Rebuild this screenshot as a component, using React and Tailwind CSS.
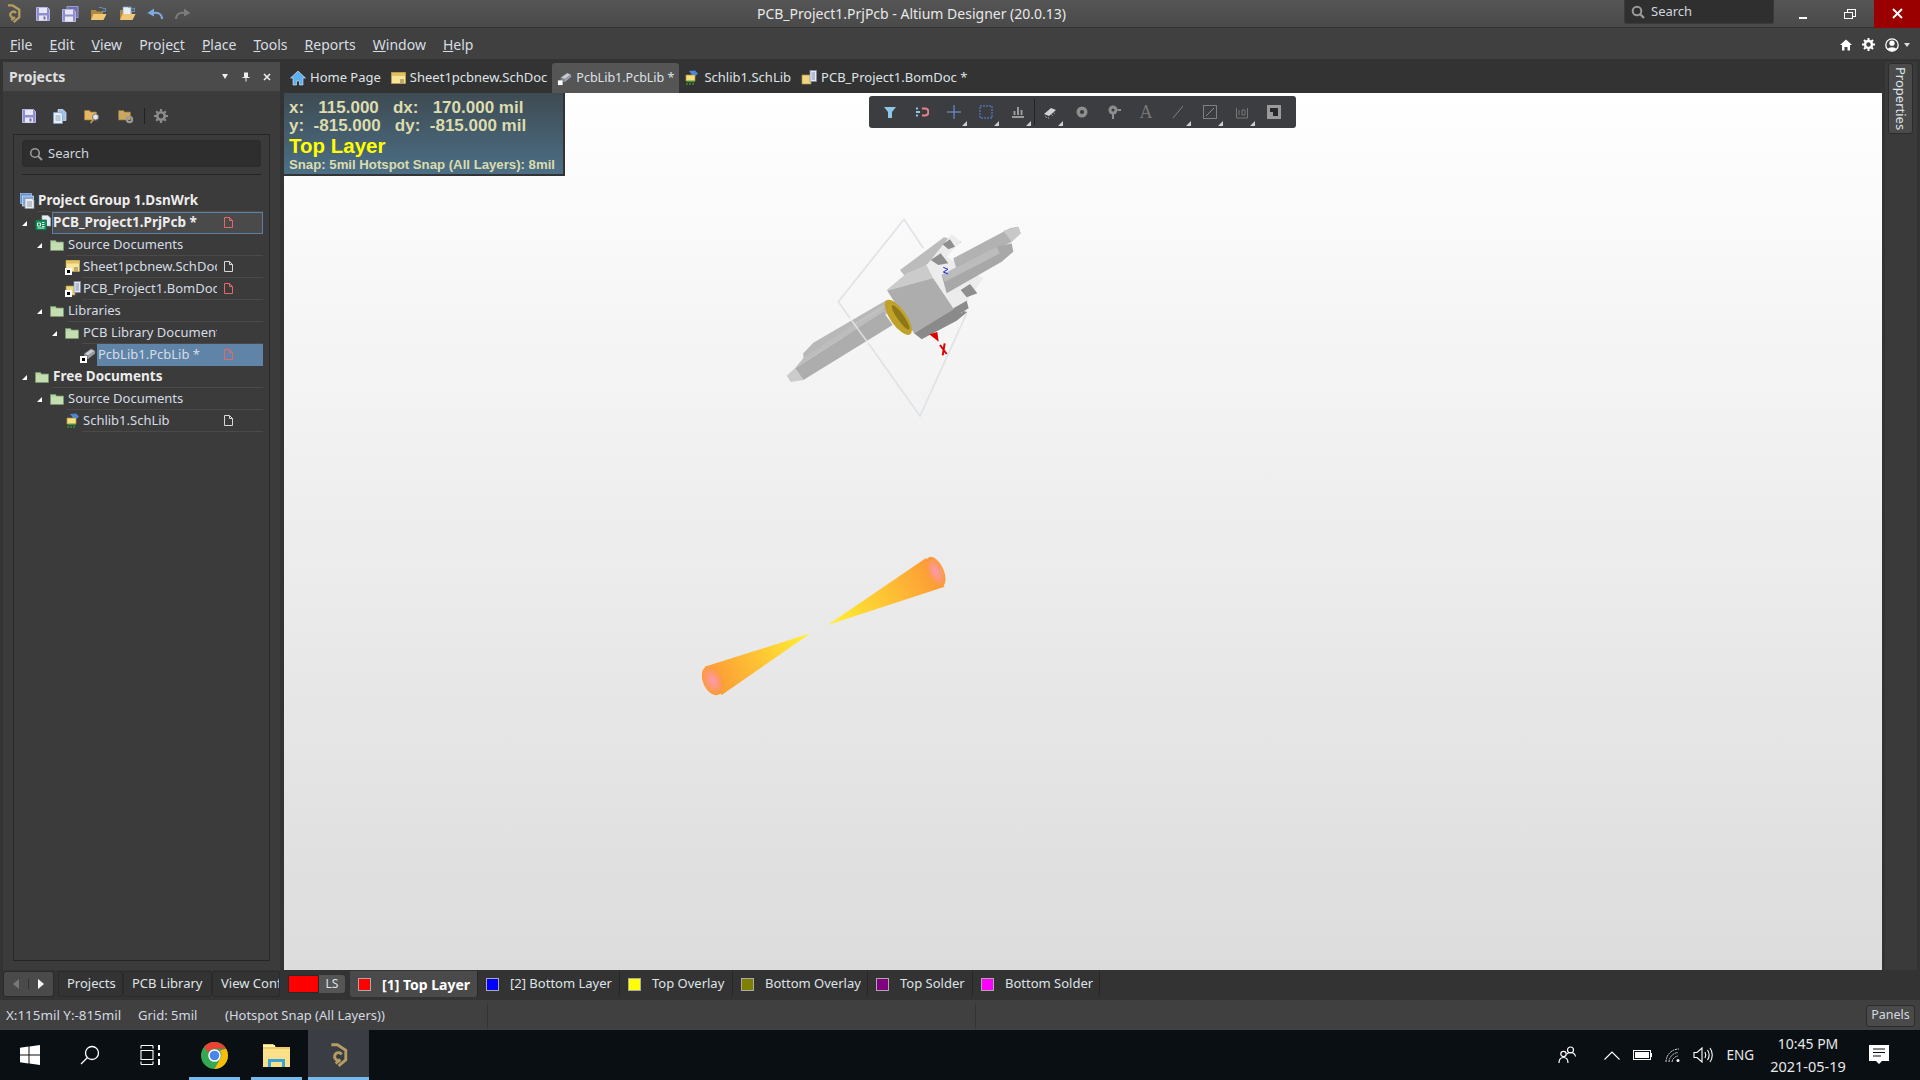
import React from "react";

const ui = { fontFamily: '"Noto Sans", "Open Sans", sans-serif' };

const Floppy = ({ size = 14 }) => (
  <svg width={size} height={size} viewBox="0 0 14 14">
    <path d="M0.500 0.500h11l2 2v11h-13z" fill="#8f8fd0" stroke="#b4b4e8" />
    <rect x="3" y="1" width="8" height="5" fill="#e8e8f4" />
    <rect x="3" y="8.5" width="8" height="5" fill="#e8e8f4" />
    <rect x="7.5" y="9.5" width="2" height="3" fill="#6a6ab0" />
  </svg>
);

const FloppyAll = () => (
  <svg width="17" height="16" viewBox="0 0 17 16">
    <rect x="5" y="0.500" width="11" height="11" fill="#6e6ea8" stroke="#9a9ad0" />
    <path d="M0.500 3.500h11l2 2v10h-13z" fill="#8f8fd0" stroke="#b4b4e8" />
    <rect x="3" y="4" width="8" height="4.500" fill="#e8e8f4" />
    <rect x="3" y="10.500" width="8" height="5" fill="#e8e8f4" />
  </svg>
);

const FolderOpen = ({ paper }) => (
  <svg width="17" height="16" viewBox="0 0 17 16">
    <path d="M1 4h5l1 1.500h6v8H1z" fill="#b08a3e" />
    {paper && <path d="M4 1h8v8H4z" fill="#e9eef6" stroke="#8da4c4" strokeWidth="0.7" />}
    <path d="M1 14l2.500-6h13l-3 6z" fill="#f1c776" />
    <path d="M9 1.500a5 4 0 0 1 5 1.500l1.500-1v3.500h-3.500l1-1" fill="none" stroke="#6f9fd0" strokeWidth="0.8" />
  </svg>
);

const Undo = ({ color }) => (
  <svg width="16" height="12" viewBox="0 0 16 12">
    <path d="M15 11c0-5-4-7-9-6" fill="none" stroke={color} strokeWidth="2" />
    <path d="M0.500 5L7 0.500v8z" fill={color} />
  </svg>
);

const Logo = ({ size = 20, color = "#b59c63" }) => (
  <svg width={size * 0.8} height={size} viewBox="0 0 16 20">
    <path d="M2 1.500h5l7 4.500v8l-6 5" fill="none" stroke={color} strokeWidth="2.400" />
    <path d="M10.500 9.500a3.200 3.200 0 1 0-1 4.500l-4 3" fill="none" stroke={color} strokeWidth="2.400" />
  </svg>
);

const Folder = () => (
  <svg width="14" height="12" viewBox="0 0 14 12">
    <path d="M0.500 1.500h5l1 1.500h7v8.500H0.500z" fill="#b7d5a6" stroke="#7d9c6e" strokeWidth="0.7" />
    <rect x="1" y="4" width="12" height="7" fill="#c3dfb2" />
  </svg>
);

const Shortcut = () => (
  <span className="absolute left-0 bottom-0 flex h-[7px] w-[7px] items-center justify-center bg-white">
    <span className="h-[3px] w-[3px] bg-black" />
  </span>
);

const TreeIcon = ({ kind }) => {
  if (kind === "folder") return <Folder />;
  if (kind === "group")
    return (
      <svg width="16" height="16" viewBox="0 0 16 16">
        <rect x="0.500" y="0.500" width="11" height="10" fill="#5f8fd6" stroke="#a8c4ee" strokeWidth="0.7" />
        <rect x="2.500" y="3" width="11" height="10" fill="#7ba6e0" stroke="#d6e4f6" strokeWidth="0.7" />
        <path d="M5 5.500h7l2 2v8H5z" fill="#e8edf4" stroke="#8a97a8" strokeWidth="0.7" />
        <path d="M7 9h5M7 11h5M7 13h5" stroke="#7a8796" strokeWidth="0.8" />
      </svg>
    );
  if (kind === "prj")
    return (
      <svg width="16" height="16" viewBox="0 0 16 16">
        <path d="M7 0.500h6l2.500 2.500v8H7z" fill="#e9edf3" stroke="#a8b2c0" strokeWidth="0.7" />
        <rect x="0.500" y="5" width="11" height="10" fill="#138a58" stroke="#0b5f3c" strokeWidth="0.7" />
        <path d="M2.500 8h3v3h-3zM7 7.500h2.500M7 9.500h2.500M7 11.500h2.500M2.500 13h7" stroke="#dff2e6" strokeWidth="1" fill="none" />
      </svg>
    );
  if (kind === "sch")
    return (
      <span className="relative block h-[16px] w-[16px]">
        <svg width="16" height="16" viewBox="0 0 16 16">
          <path d="M1 1.500h13.500v11H1z" fill="#f7e39a" stroke="#b79d52" strokeWidth="0.7" />
          <rect x="1" y="1.500" width="13.500" height="3" fill="#e3bf62" />
          <path d="M9 9h4M9 11h4" stroke="#7f7040" strokeWidth="1" />
        </svg>
        <Shortcut />
      </span>
    );
  if (kind === "bom")
    return (
      <span className="relative block h-[16px] w-[16px]">
        <svg width="16" height="16" viewBox="0 0 16 16">
          <path d="M1 5h9v9H1z" fill="#f0d67e" stroke="#ae9548" strokeWidth="0.7" />
          <rect x="9" y="0.500" width="6.500" height="11" fill="#e5e9f2" stroke="#7e88ac" strokeWidth="0.7" />
          <path d="M10.500 3h3.500M10.500 5h3.500M10.500 7h3.500M10.500 9h3.500" stroke="#6c76a0" strokeWidth="0.8" />
        </svg>
        <Shortcut />
      </span>
    );
  if (kind === "lib")
    return (
      <span className="relative block h-[16px] w-[16px]">
        <svg width="16" height="16" viewBox="0 0 16 16">
          <path d="M4 7l7-5 4 2-7 5z" fill="#c8ccd2" stroke="#70757c" strokeWidth="0.6" />
          <path d="M4 7l4 2v3l-4-2z" fill="#80858c" />
          <path d="M8 9l7-5v2.500L8 12z" fill="#9da2a8" />
        </svg>
        <Shortcut />
      </span>
    );
  return (
    <svg width="16" height="16" viewBox="0 0 16 16">
      <path d="M5 1l6-0.500 3 3-4 4z" fill="#4c86d8" />
      <path d="M2 5h9v6H2z" fill="#f5df7e" stroke="#a89240" strokeWidth="0.7" />
      <path d="M3 11.500h8M3 13v2M6 13v2M9 13v2" stroke="#3f8f3c" strokeWidth="1.400" />
    </svg>
  );
};

const DocMark = ({ red }) => (
  <svg width="9" height="11" viewBox="0 0 9 11">
    <path d="M0.500 0.500h5l3 3v7h-8z" fill="none" stroke={red ? "#e4676b" : "#d8d8d8"} />
    <path d="M5.500 0.500v3h3" fill="none" stroke={red ? "#e4676b" : "#d8d8d8"} />
  </svg>
);

const treeRows = [
  { depth: 0, icon: "group", label: "Project Group 1.DsnWrk", bold: true },
  { depth: 1, arrow: true, icon: "prj", label: "PCB_Project1.PrjPcb *", bold: true, mark: "red", box: "focus" },
  { depth: 2, arrow: true, icon: "folder", label: "Source Documents" },
  { depth: 3, icon: "sch", label: "Sheet1pcbnew.SchDoc", mark: "white" },
  { depth: 3, icon: "bom", label: "PCB_Project1.BomDoc", mark: "red" },
  { depth: 2, arrow: true, icon: "folder", label: "Libraries" },
  { depth: 3, arrow: true, icon: "folder", label: "PCB Library Documents" },
  { depth: 4, icon: "lib", label: "PcbLib1.PcbLib *", mark: "red", box: "selected" },
  { depth: 1, arrow: true, icon: "folder", label: "Free Documents", bold: true },
  { depth: 2, arrow: true, icon: "folder", label: "Source Documents" },
  { depth: 3, icon: "schlib", label: "Schlib1.SchLib", mark: "white" },
];

const TreeRow = ({ row }) => (
  <div className="flex h-[22px] items-center" style={{ paddingLeft: 3 + row.depth * 15 }}>
    <span className="flex w-[13px] shrink-0 justify-start">
      {row.arrow && <span className="h-0 w-0 border-b-[5px] border-l-[5px] border-b-white border-l-transparent" />}
    </span>
    <span className="flex w-[17px] shrink-0 items-center justify-start">
      <TreeIcon kind={row.icon} />
    </span>
    <div
      className={
        "flex h-[22px] min-w-0 flex-1 items-center border-b border-[#4a4a4a] " +
        (row.box === "selected" ? "bg-[#5f84a8] border-[#5f84a8] " : "") +
        (row.box === "focus" ? "bg-[#4a4a4a] outline outline-1 -outline-offset-1 outline-[#5b7fa6] " : "")
      }
    >
      <span
        className={
          "min-w-0 flex-1 overflow-hidden whitespace-nowrap pl-px " +
          (row.bold ? "text-[13.500px] font-bold text-[#ececec]" : "text-[13px] text-[#d6dce4]")
        }
      >
        {row.label}
      </span>
      <span className="flex w-[46px] shrink-0 pl-[7px]">{row.mark && <DocMark red={row.mark === "red"} />}</span>
    </div>
  </div>
);

const menus = [
  ["F", "ile"],
  ["E", "dit"],
  ["V", "iew"],
  ["Proje", "c", "t"],
  ["P", "lace"],
  ["T", "ools"],
  ["R", "eports"],
  ["W", "indow"],
  ["H", "elp"],
];

const Menu = ({ parts }) =>
  parts.length === 2 ? (
    <span>
      <span className="underline">{parts[0]}</span>
      {parts[1]}
    </span>
  ) : (
    <span>
      {parts[0]}
      <span className="underline">{parts[1]}</span>
      {parts[2]}
    </span>
  );

const TitleBar = () => (
  <div className="flex h-7 shrink-0 items-center bg-gradient-to-b from-[#555] to-[#4a4a4a] border-b border-[#333]">
    <div className="flex w-[34px] justify-start pl-[6px]">
      <Logo size={19} />
    </div>
    <div className="flex items-center gap-[11.500px] pl-[2px]">
      <Floppy />
      <FloppyAll />
      <FolderOpen />
      <FolderOpen paper />
      <Undo color="#7fa9e0" />
      <span className="-scale-x-100">
        <Undo color="#7b7b7b" />
      </span>
    </div>
    <div className="w-[561px]" />
    <span className="w-[320px] whitespace-nowrap text-center text-[14px] text-[#e8e8e8]">
      PCB_Project1.PrjPcb - Altium Designer (20.0.13)
    </span>
    <div className="flex-1" />
    <div className="flex h-[24px] w-[150px] items-center gap-[6px] self-start rounded-b-[3px] border border-t-0 border-[#3a3a3a] bg-[#2f2f2f] pl-[6px] pt-[1px]">
      <svg width="14" height="14" viewBox="0 0 14 14">
        <circle cx="6" cy="6" r="4.300" fill="none" stroke="#9a9a9a" strokeWidth="2" />
        <path d="M9 9l4 4" stroke="#9a9a9a" strokeWidth="2.400" />
      </svg>
      <span className="text-[13px] text-[#cfd6de]">Search</span>
    </div>
    <div className="flex w-[100px] items-center">
      <span className="ml-[25px] mt-[9px] h-[2px] w-[8px] bg-white" />
      <span className="relative ml-[37px] h-[10px] w-[12px]">
        <span className="absolute right-0 top-0 h-[8px] w-[9px] border border-white" />
        <span className="absolute bottom-0 left-0 h-[7px] w-[9px] border border-white bg-[#505050]" />
      </span>
    </div>
    <div className="flex h-[28px] w-[46px] items-center justify-center bg-[#9b0000]">
      <svg width="11" height="11" viewBox="0 0 11 11">
        <path d="M1 1l9 9M10 1l-9 9" stroke="#fff" strokeWidth="1.800" />
      </svg>
    </div>
  </div>
);

const MenuBar = () => (
  <div className="flex h-[31px] shrink-0 items-center bg-[#404040] pl-[10px] pt-[2px] text-[14px] text-[#d8dde4]">
    <div className="flex gap-[17px]">
      {menus.map((m) => (
        <Menu key={m.join("")} parts={m} />
      ))}
    </div>
    <div className="flex-1" />
    <div className="flex items-center gap-[10px] pr-[10px]">
      <svg width="12" height="12" viewBox="0 0 12 12">
        <path d="M6 0.500L12 6h-2v5.500H7.500V8h-3v3.500H2V6H0z" fill="#fff" />
      </svg>
      <svg width="13" height="13" viewBox="0 0 13 13">
        <circle cx="6.500" cy="6.500" r="3.500" fill="none" stroke="#fff" strokeWidth="2.500" />
        <path d="M6.500 0v2M6.500 11v2M0 6.500h2M11 6.500h2M2 2l1.500 1.500M9.500 9.500L11 11M11 2L9.500 3.500M3.500 9.500L2 11" stroke="#fff" strokeWidth="2" />
      </svg>
      <span className="flex items-center gap-[5px]">
        <svg width="14" height="14" viewBox="0 0 14 14">
          <circle cx="7" cy="7" r="6.200" fill="none" stroke="#fff" strokeWidth="1.300" />
          <circle cx="7" cy="5.200" r="2.600" fill="#fff" />
          <path d="M2.500 11.500c1-3 8-3 9 0L7 13.500z" fill="#fff" />
        </svg>
        <span className="h-0 w-0 border-x-[3.500px] border-t-[4px] border-x-transparent border-t-[#ddd]" />
      </span>
    </div>
  </div>
);

const ProjectsPanel = () => (
  <div className="flex w-[284px] shrink-0 flex-col pl-[3px] pr-[4px] pt-[3px]">
    <div className="flex h-[29px] shrink-0 items-center bg-[#4b4b4b] pl-[6px]">
      <span className="flex-1 text-[14px] font-bold text-[#e0e0e0]">Projects</span>
      <span className="mr-[14px] h-0 w-0 border-x-[3.500px] border-t-[5px] border-x-transparent border-t-[#eee]" />
      <svg className="mr-[13px]" width="8" height="10" viewBox="0 0 8 10">
        <path d="M2 0.500h4v4.500h1.500v1h-3v3.500h-1V6h-3V5H2z" fill="#eee" />
      </svg>
      <svg className="mr-[9px]" width="8" height="8" viewBox="0 0 8 8">
        <path d="M1 1l6 6M7 1L1 7" stroke="#eee" strokeWidth="1.600" />
      </svg>
    </div>
    <div className="flex min-h-0 flex-1 flex-col bg-[#3b3b3b] pb-[9px] pl-[10px] pr-[10px]">
      <div className="flex h-[43px] shrink-0 items-center gap-[17px] pl-[9px] pt-[7px]">
        <Floppy />
        <svg width="14" height="15" viewBox="0 0 14 15">
          <path d="M5 0.500h5l3 3v8H5z" fill="#9ec2e8" stroke="#dfe9f6" strokeWidth="0.700" />
          <path d="M0.500 3.500h7l2 2v9h-9z" fill="#e8eef6" stroke="#7fa0c8" strokeWidth="0.700" />
          <path d="M2.500 7h5M2.500 9h5M2.500 11h5" stroke="#6d8fb8" strokeWidth="0.800" />
        </svg>
        <svg width="17" height="15" viewBox="0 0 17 15">
          <path d="M0.500 1.500h5l1 1.500h6v8h-12z" fill="#e3b765" stroke="#9c7c3a" strokeWidth="0.700" />
          <circle cx="11.500" cy="8" r="3" fill="#dfe6ee" stroke="#777" />
          <path d="M9.500 10.500L6.500 14" stroke="#c89c4a" strokeWidth="1.600" />
        </svg>
        <svg width="17" height="15" viewBox="0 0 17 15">
          <path d="M0.500 1.500h5l1 1.500h6v8h-12z" fill="#c9a763" stroke="#8c7238" strokeWidth="0.700" />
          <circle cx="11.500" cy="10.500" r="2.700" fill="none" stroke="#9a9a9a" strokeWidth="2" />
        </svg>
        <span className="-mx-[8px] h-[16px] w-px bg-[#222]" />
        <svg width="14" height="14" viewBox="0 0 13 13">
          <circle cx="6.500" cy="6.500" r="3.500" fill="none" stroke="#8b8b8b" strokeWidth="2.500" />
          <path d="M6.500 0v2M6.500 11v2M0 6.500h2M11 6.500h2M2 2l1.500 1.500M9.500 9.500L11 11M11 2L9.500 3.500M3.500 9.500L2 11" stroke="#8b8b8b" strokeWidth="2" />
        </svg>
      </div>
      <div className="flex min-h-0 flex-1 flex-col border border-[#262626] pb-[2px]">
        <div className="mx-[8px] mt-[5px] flex h-[27px] shrink-0 items-center gap-[5px] rounded-[3px] border border-[#2b2b2b] bg-[#2e2e2e] pl-[6px]">
          <svg width="14" height="14" viewBox="0 0 14 14">
            <circle cx="6" cy="6" r="4.300" fill="none" stroke="#9a9a9a" strokeWidth="1.600" />
            <path d="M9 9l4 4" stroke="#9a9a9a" strokeWidth="2" />
          </svg>
          <span className="text-[13px] text-[#cfd6de]">Search</span>
        </div>
        <div className="mx-[8px] mb-[15px] mt-[7px] h-px shrink-0 bg-[#262626]" />
        <div className="-ml-[10px] mr-[6px]">
          {treeRows.map((row) => (
            <TreeRow key={row.depth + row.label} row={row} />
          ))}
        </div>
      </div>
    </div>
  </div>
);

const DocTab = ({ active, icon, children }) => (
  <div
    className={
      "flex items-center gap-[4px] whitespace-nowrap rounded-t-[3px] px-[5px] text-[#dfe3e8] " +
      (active ? "h-[30px] bg-[#555] text-[12.500px]" : "mb-[1px] h-[29px] text-[13px]")
    }
  >
    {icon}
    {children}
  </div>
);

const DocTabs = () => (
  <div className="flex h-[34px] shrink-0 items-end pl-px">
    <DocTab
      icon={
        <svg width="16" height="16" viewBox="0 0 16 16">
          <path d="M8 1L0.500 8H3v7h3.500v-4h3v4H13V8h2.500z" fill="#5fb0ee" stroke="#dcecfa" strokeWidth="0.600" />
        </svg>
      }
    >
      Home Page
    </DocTab>
    <DocTab
      icon={
        <svg width="15" height="12" viewBox="0 0 15 12">
          <path d="M0.500 0.500h14v11H0.500z" fill="#f7e39a" stroke="#b79d52" />
          <rect x="1" y="1" width="13" height="3" fill="#e3bf62" />
          <path d="M9 8h4M9 10h4" stroke="#7f7040" />
        </svg>
      }
    >
      Sheet1pcbnew.SchDoc
    </DocTab>
    <DocTab
      active
      icon={
        <svg width="15" height="15" viewBox="0 0 16 16">
          <path d="M4 7l7-5 4 2-7 5z" fill="#c8ccd2" stroke="#70757c" strokeWidth="0.600" />
          <path d="M4 7l4 2v3l-4-2z" fill="#80858c" />
          <path d="M8 9l7-5v2.500L8 12z" fill="#9da2a8" />
          <rect x="1" y="10" width="5" height="5" fill="#fff" />
        </svg>
      }
    >
      PcbLib1.PcbLib *
    </DocTab>
    <DocTab icon={<TreeIcon kind="schlib" />}>Schlib1.SchLib</DocTab>
    <DocTab
      icon={
        <svg width="16" height="16" viewBox="0 0 16 16">
          <path d="M1 5h9v9H1z" fill="#f0d67e" stroke="#ae9548" strokeWidth="0.700" />
          <rect x="9" y="0.500" width="6.500" height="11" fill="#e5e9f2" stroke="#7e88ac" strokeWidth="0.700" />
          <path d="M10.500 3h3.500M10.500 5h3.500M10.500 7h3.500M10.500 9h3.500" stroke="#6c76a0" strokeWidth="0.800" />
        </svg>
      }
    >
      PCB_Project1.BomDoc *
    </DocTab>
  </div>
);

const Hud = () => (
  <div
    className="absolute left-0 top-0 h-[83px] w-[281px] border-b-2 border-r-2 border-[#333] bg-gradient-to-b from-[#3e4b53] to-[#4c6f86] pl-[5px] pt-[3px] font-bold"
    style={{ fontFamily: '"Liberation Sans", sans-serif' }}
  >
    <div className="flex h-[18px] items-center whitespace-pre pt-[6px] text-[17px] leading-[18px] text-[#dcdcae]">
      {"x:   115.000   dx:   170.000 mil"}
    </div>
    <div className="mt-[1px] flex h-[18px] items-center whitespace-pre pt-[4px] text-[17px] leading-[18px] text-[#dcdcae]">
      {"y:  -815.000   dy:  -815.000 mil"}
    </div>
    <div className="mt-[1px] text-[20.500px] leading-[23px] text-[#ffff00]">Top Layer</div>
    <div className="whitespace-nowrap text-[13.200px] leading-[15px] text-[#dcdcae]">
      Snap: 5mil Hotspot Snap (All Layers): 8mil
    </div>
  </div>
);

// toolbar glyphs, in the order they sit on the floating bar
const tools = [
  { d: <path d="M1 2h12L9 7v6H5V7z" fill="#8ec6e6" /> },
  {
    d: (
      <>
        <path d="M7 3.500h3a3.500 3.500 0 0 1 0 7H7" fill="none" stroke="#e8808a" strokeWidth="2.200" />
        <path d="M1 3.500h2M1 7h4M1 10.500h2" stroke="#8ec6e6" strokeWidth="1.800" />
      </>
    ),
  },
  { d: <path d="M7 0v14M0 7h14" stroke="#6f9fe0" strokeWidth="1" />, corner: true },
  { d: <rect x="1" y="1" width="12" height="12" fill="none" stroke="#5f86e0" strokeDasharray="2 1" />, corner: true },
  { d: <path d="M1 12h12M3.500 10V6M7 10V2M10.500 10V5" stroke="#9a9a9a" strokeWidth="2" />, corner: true },
  {
    d: (
      <>
        <path d="M1 9l7-6 5 2-7 6z" fill="#cfd2d6" />
        <path d="M2 11l2 2M5 12l1 2M8 9l2 2M10 7l2 2" stroke="#8a8a8a" />
      </>
    ),
    corner: true,
  },
  {
    d: (
      <>
        <circle cx="7" cy="7" r="5.500" fill="#8e8e8e" />
        <circle cx="7" cy="7" r="2" fill="#3a3a3a" />
      </>
    ),
  },
  {
    d: (
      <>
        <circle cx="6" cy="5" r="4.500" fill="#8e8e8e" />
        <circle cx="6" cy="5" r="1.500" fill="#3a3a3a" />
        <path d="M6 9v5M10.500 5H14" stroke="#8e8e8e" strokeWidth="2" />
      </>
    ),
  },
  { text: "A" },
  { d: <path d="M2 13L12 1" stroke="#808080" />, corner: true },
  {
    d: (
      <>
        <rect x="0.500" y="0.500" width="13" height="13" fill="none" stroke="#808080" />
        <path d="M3 11l8-8" stroke="#8a8a8a" />
      </>
    ),
    corner: true,
  },
  {
    d: (
      <>
        <path d="M1.500 3v10h11V3" fill="none" stroke="#777" />
        <path d="M4 5v5M7 5v5h3V5H7" fill="none" stroke="#777" />
      </>
    ),
    corner: true,
  },
  {
    d: (
      <>
        <rect x="0" y="0" width="14" height="14" fill="#9a9a9a" />
        <path d="M3 3h8v8H6V7H3z" fill="#26282a" />
      </>
    ),
  },
];

const FloatingToolbar = () => (
  <div className="absolute left-[585px] top-[3px] flex h-[32px] w-[427px] items-center rounded-[3px] bg-[#3b3d40] pl-[5px]">
    {tools.map((t, i) => (
      <React.Fragment key={i}>
        {i === 5 && <span className="-mr-px h-[26px] w-px bg-[#222]" />}
        <span className="relative flex h-[32px] w-[32px] items-center justify-center">
          {t.text ? (
            <span className="text-[18px] leading-none text-[#777]" style={{ fontFamily: '"Liberation Serif", serif' }}>
              {t.text}
            </span>
          ) : (
            <svg width="14" height="14" viewBox="0 0 14 14">
              {t.d}
            </svg>
          )}
          {t.corner && (
            <span className="absolute bottom-[2px] right-[3px] h-0 w-0 border-b-[5px] border-l-[5px] border-b-[#cfcfcf] border-l-transparent" />
          )}
        </span>
      </React.Fragment>
    ))}
  </div>
);

// 3d model, coordinates read off the reference at 3x
const Model = () => (
  <svg className="absolute left-[486px] top-[117px]" width="270" height="220" viewBox="0 0 810 660">
    <path d="M460 115L402 28 205 275 240 325M295 400L450 618 590 310" fill="none" stroke="#dfe3e8" strokeWidth="5" />
    <path d="M100 430L130 398 350 270 372 300 100 445z" fill="#b8b8b8" />
    <path d="M75 475L340 305 368 345 100 510z" fill="#adadad" />
    <path d="M50 497L75 475 100 510 62 516z" fill="#cbcbcb" />
    <path d="M100 445L75 475 340 305 330 290z" fill="#bdbdbd" />
    <path d="M250 345L350 285" stroke="#c6c6c6" strokeWidth="4" />
    <path d="M240 325L295 400" stroke="#eceff2" strokeWidth="5" opacity="0.700" />
    <path d="M390 180L522 82 575 95 490 150 410 205z" fill="#bcbcbc" />
    <path d="M350 240L410 190 470 165 490 205 385 280z" fill="#cbcbcb" />
    <path d="M352 242L490 205 552 296 432 370z" fill="#adadad" />
    <path d="M432 370L552 296 592 306 560 332 455 388z" fill="#8a8a8a" />
    <path d="M470 165L545 72 572 95 530 140 640 205 600 260 575 310 550 295 490 205z" fill="#ececec" />
    <path d="M518 103L540 88 555 110 535 118zM482 150L512 130 535 160 505 165zM572 240L600 222 622 250 590 262z" fill="#8f8f8f" />
    <path d="M550 295L590 272 596 295 562 315z" fill="#8b8b8b" />
    <path d="M550 145L720 55 745 50 752 70 725 95 560 180z" fill="#b2b2b2" />
    <path d="M700 62L745 50 752 70 725 95z" fill="#c8c8c8" />
    <path d="M515 195L680 110 725 100 730 125 695 155 530 250z" fill="#a8a8a8" />
    <path d="M515 195L680 110 690 130 525 215z" fill="#bcbcbc" />
    <ellipse cx="385" cy="322" rx="24" ry="62" transform="rotate(-35 385 322)" fill="#c0a228" />
    <ellipse cx="392" cy="322" rx="10" ry="44" transform="rotate(-35 392 322)" fill="#8e7718" />
    <path d="M478 373L502 366 506 395z" fill="#e00000" />
    <path d="M510 405L530 432M524 400L518 436" stroke="#e00000" strokeWidth="6" />
    <path d="M520 172L534 178 520 186 534 192" fill="none" stroke="#2020e0" strokeWidth="3" />
  </svg>
);

const Cones = () => (
  <svg className="absolute left-[406px] top-[447px]" width="270" height="170" viewBox="0 0 810 510">
    <defs>
      <linearGradient id="coneA" gradientUnits="userSpaceOnUse" x1="413" y1="255" x2="730" y2="95">
        <stop offset="0" stopColor="#fff232" />
        <stop offset="1" stopColor="#fc9c36" />
      </linearGradient>
      <linearGradient id="coneB" gradientUnits="userSpaceOnUse" x1="362" y1="280" x2="70" y2="420">
        <stop offset="0" stopColor="#fff232" />
        <stop offset="1" stopColor="#fc9c36" />
      </linearGradient>
      <radialGradient id="tip">
        <stop offset="0" stopColor="#fd98b4" />
        <stop offset="1" stopColor="#fc9c36" />
      </radialGradient>
    </defs>
    <path d="M413 255L708 54 764 140z" fill="url(#coneA)" />
    <ellipse cx="737" cy="95" rx="24" ry="48" transform="rotate(-25 737 95)" fill="url(#tip)" />
    <path d="M362 280L44 380 95 465z" fill="url(#coneB)" />
    <ellipse cx="68" cy="422" rx="29" ry="46" transform="rotate(-25 68 422)" fill="url(#tip)" />
  </svg>
);

const Canvas = () => (
  <div className="relative min-h-0 flex-1 bg-gradient-to-b from-white to-[#dcdcdc]">
    <Model />
    <Cones />
    <Hud />
    <FloatingToolbar />
  </div>
);

const RightStrip = () => (
  <div className="ml-[3px] mr-[3px] mt-[3px] w-[32px] shrink-0 bg-[#3a3a3a] pl-[3px] pt-[1px]">
    <div className="flex h-[71px] w-[25px] items-start justify-center rounded-[3px] border border-[#2c2c2c] bg-[#4a4a4a] pt-[3px]">
      <span className="text-[13px] leading-none text-[#dfe3e8] [writing-mode:vertical-rl]">Properties</span>
    </div>
  </div>
);

const layerTabs = [
  { name: "[1] Top Layer", swatch: "bg-[#ff0000]", width: "w-[128px]", active: true },
  { name: "[2] Bottom Layer", swatch: "bg-[#0000ff]", width: "w-[142px]" },
  { name: "Top Overlay", swatch: "bg-[#ffff00]", width: "w-[113px]" },
  { name: "Bottom Overlay", swatch: "bg-[#808000]", width: "w-[135px]" },
  { name: "Top Solder", swatch: "bg-[#800080]", width: "w-[105px]" },
  { name: "Bottom Solder", swatch: "bg-[#ff00ff]", width: "w-[127px]" },
];

const panelTabs = [
  { name: "Projects", width: "w-[65px]" },
  { name: "PCB Library", width: "w-[89px]" },
  { name: "View Configuration", width: "w-[68px]" },
];

const LayerStrip = () => (
  <div className="flex h-[30px] shrink-0 bg-[#333] pl-[3px] pt-[1px] text-[13px] text-[#dfe3e8]">
    <div className="flex h-[26px] w-[51px] shrink-0 items-center rounded-[3px] border border-[#2a2a2a] bg-[#4a4a4a]">
      <span className="flex w-[25px] justify-center border-r border-[#333]">
        <span className="h-0 w-0 border-y-[5px] border-r-[6px] border-y-transparent border-r-[#777]" />
      </span>
      <span className="flex flex-1 justify-center">
        <span className="h-0 w-0 border-y-[5px] border-l-[6px] border-y-transparent border-l-white" />
      </span>
    </div>
    <div className="ml-[4px] flex shrink-0">
      {panelTabs.map((t) => (
        <div
          key={t.name}
          className={"flex h-[26px] items-center overflow-hidden whitespace-nowrap rounded-[3px] border border-[#2a2a2a] pl-[8px] " + t.width}
        >
          {t.name}
        </div>
      ))}
    </div>
    <div className="ml-[8px] mt-[4px] flex h-[18px] w-[57px] shrink-0">
      <span className="w-[31px] border border-[#2a2a2a] bg-[#ff0000]" />
      <span className="flex w-[26px] items-center justify-center rounded-r-[3px] bg-[#555] text-[12px]">LS</span>
    </div>
    <div className="ml-[5px] flex shrink-0">
      {layerTabs.map((t) => (
        <div
          key={t.name}
          className={
            "flex h-[26px] items-center gap-[11px] whitespace-nowrap rounded-b-[3px] border-r border-[#262626] pl-[8px] " +
            t.width +
            (t.active ? " bg-[#4a4a4a] text-[14px] font-bold text-white" : "")
          }
        >
          <span className={"h-[13px] w-[13px] border border-[#aaa] " + t.swatch} />
          {t.name}
        </div>
      ))}
    </div>
  </div>
);

const StatusBar = () => (
  <div className="flex h-[30px] shrink-0 items-center bg-[#404040] pl-[6px] pt-[1px] text-[13px] text-[#d4d9e0]">
    <span className="w-[132px] text-[13.400px]">X:115mil Y:-815mil</span>
    <span className="w-[87px]">Grid: 5mil</span>
    <span className="w-[262px]">(Hotspot Snap (All Layers))</span>
    <span className="h-[24px] w-px bg-[#333]" />
    <span className="ml-[487px] h-[24px] w-px bg-[#333]" />
    <div className="flex-1" />
    <span className="mr-[5px] flex h-[22px] w-[49px] items-center justify-center rounded-[3px] border border-[#2c2c2c] bg-[#4a4a4a] text-[12.500px]">
      Panels
    </span>
  </div>
);

const Chrome = () => (
  <svg width="27" height="27" viewBox="0 0 28 28">
    <circle cx="14" cy="14" r="14" fill="#34a853" />
    <path d="M14 0a14 14 0 0 1 12.100 7H14a7 7 0 0 0-6.500 4.400L3.200 5A14 14 0 0 1 14 0z" fill="#ea4335" />
    <path d="M26.100 7A14 14 0 0 1 14 28l5.800-10.500A7 7 0 0 0 19.500 9z" fill="#fbbc05" />
    <circle cx="14" cy="14" r="6.500" fill="#fff" />
    <circle cx="14" cy="14" r="5" fill="#4a86e8" />
  </svg>
);

const Explorer = () => (
  <svg width="27" height="23" viewBox="0 0 27 23">
    <path d="M0 0h10l3 3h14v20H0z" fill="#f0cb63" />
    <rect y="5" width="27" height="18" fill="#fbe08a" />
    <rect x="0" y="1" width="12" height="2" fill="#fff3c0" />
    <path d="M5 15h17v8h-3v-5H8v5H5z" fill="#3aa3dc" />
  </svg>
);

const TaskSlot = ({ width, active, underline, children }) => (
  <div className={"relative flex h-full items-center justify-center " + width + (active ? " bg-[#3a3e44]" : "")}>
    {children}
    {underline && <span className="absolute inset-x-0 bottom-0 h-[3px] bg-[#76b9ed]" />}
  </div>
);

const Taskbar = () => (
  <div className="flex h-[50px] shrink-0 items-center bg-[#0a0f14] text-[14px] text-[#e8e8e8]">
    <TaskSlot width="w-[60px]">
      <svg width="20" height="20" viewBox="0 0 20 20">
        <path d="M0 2.800l8.500-1.200v8H0zM9.500 1.400L20 0v9.600H9.500zM0 10.500h8.500v8L0 17.300zM9.500 10.500H20V20L9.500 18.600z" fill="#fff" />
      </svg>
    </TaskSlot>
    <TaskSlot width="w-[60px]">
      <svg width="20" height="20" viewBox="0 0 20 20">
        <circle cx="12" cy="8" r="6.500" fill="none" stroke="#fff" strokeWidth="1.300" />
        <path d="M7.500 12.500L1 19" stroke="#fff" strokeWidth="1.300" />
      </svg>
    </TaskSlot>
    <TaskSlot width="w-[60px]">
      <svg width="20" height="20" viewBox="0 0 20 20">
        <path d="M1 0.500h12M1 19.500h12M1 5.500h12v9H1zM1 0.500v3M13 0.500v3M1 16.500v3M13 16.500v3" fill="none" stroke="#fff" strokeWidth="1.100" />
        <path d="M19 0v5M19 8v3M19 14v6" stroke="#fff" strokeWidth="2" />
      </svg>
    </TaskSlot>
    <div className="w-[9px]" />
    <TaskSlot width="w-[51px]" underline>
      <Chrome />
    </TaskSlot>
    <div className="w-[11px]" />
    <TaskSlot width="w-[51px]" underline>
      <Explorer />
    </TaskSlot>
    <div className="w-[6px]" />
    <TaskSlot width="w-[61px]" active underline>
      <Logo size={24} />
    </TaskSlot>
    <div className="flex-1" />
    <svg width="19" height="18" viewBox="0 0 19 18">
      <circle cx="12.500" cy="4" r="3" fill="none" stroke="#fff" strokeWidth="1.200" />
      <circle cx="5.500" cy="8" r="2.700" fill="none" stroke="#fff" strokeWidth="1.200" />
      <path d="M1 17c0-4 2-5.500 4.500-5.500S10 13 10 17M9 8c1-1 2-1.500 3.500-1.500 2.500 0 4.500 1.500 5 4" fill="none" stroke="#fff" strokeWidth="1.200" />
    </svg>
    <svg className="ml-[27px]" width="16" height="9" viewBox="0 0 16 9">
      <path d="M0.500 8.500L8 1l7.500 7.500" fill="none" stroke="#fff" strokeWidth="1.200" />
    </svg>
    <span className="ml-[13px] flex items-center">
      <span className="h-[10px] w-[18px] border border-white bg-white outline outline-1 outline-[#0a0f14] -outline-offset-2" />
      <span className="h-[4px] w-[1.500px] bg-white" />
    </span>
    <svg className="ml-[13px]" width="16" height="16" viewBox="0 0 16 16">
      <path d="M1 15a13 13 0 0 1 13-13M4 15a10 10 0 0 1 9-9.500M7 15a7 7 0 0 1 6-6" fill="none" stroke="#d8d8d8" strokeWidth="1" strokeDasharray="2 0.700" />
      <circle cx="13" cy="13.500" r="1.500" fill="#fff" />
    </svg>
    <svg className="ml-[12px]" width="20" height="16" viewBox="0 0 20 16">
      <path d="M1 5.500h3L9 1v14l-5-4.500H1z" fill="none" stroke="#fff" strokeWidth="1.100" />
      <path d="M12 5c1 2 1 4 0 6M14.500 3c2 3 2 7 0 10M17 1c3 4 3 10 0 14" fill="none" stroke="#fff" strokeWidth="1.100" />
    </svg>
    <span className="ml-[13px] text-[13.500px]">ENG</span>
    <div className="ml-[16px] flex w-[76px] flex-col items-center leading-[23px]">
      <span>10:45 PM</span>
      <span className="text-[14.500px]">2021-05-19</span>
    </div>
    <svg className="ml-[23px] mr-[31px]" width="20" height="20" viewBox="0 0 20 20">
      <path d="M0 0h20v16h-7l-3 3-3-3H0z" fill="#fff" />
      <path d="M4 4h12M4 7.500h12M4 11h8" stroke="#0a0f14" strokeWidth="1.100" />
    </svg>
  </div>
);

const App = () => (
  <div className="flex h-screen w-screen flex-col overflow-hidden bg-[#333]" style={ui}>
    <TitleBar />
    <MenuBar />
    <div className="flex min-h-0 flex-1">
      <ProjectsPanel />
      <div className="flex min-w-0 flex-1 flex-col">
        <DocTabs />
        <Canvas />
      </div>
      <RightStrip />
    </div>
    <LayerStrip />
    <StatusBar />
    <Taskbar />
  </div>
);

export default App;
